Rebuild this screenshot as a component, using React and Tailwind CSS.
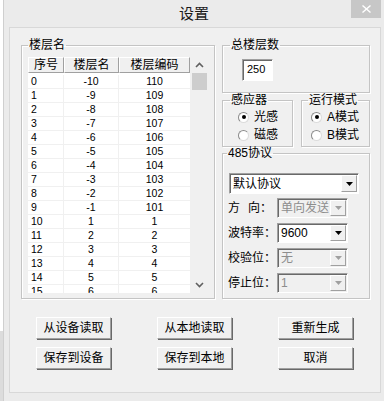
import React from 'react';

const floors = Array.from({ length: 16 }, (_, i) => ({
    idx: i,
    name: i < 10 ? i - 10 : i - 9,
    code: i < 10 ? 110 - i : i - 9,
}));

const raised = 'border border-t-white border-l-white border-r-[#a0a0a0] border-b-[#a0a0a0] shadow-[1px_1px_0_#696969]';
const sunken = 'border border-t-[#a0a0a0] border-l-[#a0a0a0] border-r-white border-b-white shadow-[inset_1px_1px_0_#696969]';

const GroupBox = ({ title, legendClass = 'ml-[6px]', className = '', children }) => (
    <fieldset className={`border border-[#c4c4c4] shadow-[inset_1px_1px_0_#fff,1px_1px_0_#fff] min-w-0 ${className}`}>
        <legend className={`px-[1px] text-[12px] leading-[16px] ${legendClass}`}>{title}</legend>
        {children}
    </fieldset>
);

const Arrow = ({ disabled }) => (
    <svg width="7" height="4" viewBox="0 0 7 4">
        <polygon points="0,0 7,0 3.5,4" fill={disabled ? '#a0a0a0' : '#000'} />
    </svg>
);

const Combo = ({ value, disabled, className = '' }) => (
    <div className={`${sunken} ${disabled ? 'bg-[#f0f0f0] text-[#8d8d8d]' : 'bg-white text-black'} flex items-center ${className}`}>
        <span className="flex-1 pl-[3px] text-[12px] leading-[16px] whitespace-nowrap overflow-hidden">{value}</span>
        <div className={`${raised} shadow-none border-r-[#696969] border-b-[#696969] bg-[#f0f0f0] w-[16px] self-stretch my-[1px] mr-[1px] flex items-center justify-center`}>
            <Arrow disabled={disabled} />
        </div>
    </div>
);

const Radio = ({ label, checked }) => (
    <div className="flex items-center h-[18px] gap-[5px]">
        <div className="w-[11px] h-[11px] rounded-full border border-t-[#8a8a8a] border-l-[#8a8a8a] border-r-[#dcdcdc] border-b-[#dcdcdc] bg-white flex items-center justify-center">
            {checked && <div className="w-[4px] h-[4px] rounded-full bg-black" />}
        </div>
        <span className="text-[12px] leading-[16px]">{label}</span>
    </div>
);

const Button = ({ children }) => (
    <button className={`${raised} w-[75px] h-[22px] bg-[#f0f0f0] text-[12px] leading-[16px] text-black`}>
        {children}
    </button>
);

const FormRow = ({ label, children }) => (
    <div className="flex items-center h-[20px] ml-[5px]">
        <div className="w-[49px] text-[12px] leading-[16px] whitespace-nowrap">{label}</div>
        {children}
    </div>
);

export default function App() {
    return (
        <div className="w-[384px] h-[401px] flex bg-[#ebebeb] overflow-hidden font-['Liberation_Sans','Noto_Sans_CJK_SC',sans-serif] text-black">
            {/* Window behind */}
            <div className="w-[3px] flex flex-col">
                <div className="flex-1 bg-white" />
                <div className="h-[70px] bg-[#dcdcdc]" />
            </div>
            <div className="w-px bg-[#cfcfcf]" />

            <div className="w-[380px] flex flex-col">
                {/* Title bar */}
                <div className="h-[27px] relative flex items-center justify-center">
                    <span className="text-[15px] leading-[20px] text-[#1a1a1a]">设置</span>
                    <div className="absolute top-0 right-[3px] w-[30px] h-[18px] bg-[#c7c7c7] flex items-center justify-center">
                        <svg width="9" height="8" viewBox="0 0 9 8">
                            <path d="M0.5 0.5 L8.5 7.5 M8.5 0.5 L0.5 7.5" stroke="#fff" strokeWidth="1.4" />
                        </svg>
                    </div>
                </div>

                {/* Panel */}
                <div className="ml-[5px] w-[372px] h-[366px] border border-[#d8d8d8] bg-[#f0f0f0] pt-[9px] pl-[11px]">
                    <div className="flex gap-[7px]">
                        {/* Floor list */}
                        <GroupBox title="楼层名" className="w-[194px] h-[262px]">
                            <div className="pl-[6px] pt-[4px]">
                                <div className="flex w-[179px] h-[236px]">
                                    <div className="w-[162px] flex flex-col bg-white">
                                        <div className="flex h-[16px] bg-[#f0f0f0]">
                                            {[['序号', 'w-[36px]'], ['楼层名', 'w-[55px]'], ['楼层编码', 'w-[71px]']].map(([t, w]) => (
                                                <div key={t} className={`${w} ${raised} shadow-none border-r-[#696969] border-b-[#696969] text-[12px] leading-[14px] text-center`}>
                                                    {t}
                                                </div>
                                            ))}
                                        </div>
                                        <div className="flex-1 overflow-hidden pt-[2px]">
                                            {floors.map((f) => (
                                                <div key={f.idx} className="flex h-[14px] border-b border-[#f0f0f0] text-[10.5px] leading-[13px]">
                                                    <div className="w-[36px] pl-[3px] border-r border-[#f0f0f0]">{f.idx}</div>
                                                    <div className="w-[55px] text-center border-r border-[#f0f0f0]">{f.name}</div>
                                                    <div className="w-[71px] text-center">{f.code}</div>
                                                </div>
                                            ))}
                                        </div>
                                    </div>
                                    {/* Scrollbar */}
                                    <div className="w-[17px] bg-[#f0f0f0] flex flex-col">
                                        <div className="h-[16px] flex items-center justify-center pl-[1px]">
                                            <svg width="9" height="6" viewBox="0 0 9 6">
                                                <polyline points="1,5 4.5,1.5 8,5" fill="none" stroke="#606060" strokeWidth="1.6" />
                                            </svg>
                                        </div>
                                        <div className="ml-[2px] w-[15px] h-[17px] bg-[#cdcdcd]" />
                                        <div className="flex-1" />
                                        <div className="h-[17px] flex items-center justify-center pl-[1px]">
                                            <svg width="9" height="6" viewBox="0 0 9 6">
                                                <polyline points="1,1 4.5,4.5 8,1" fill="none" stroke="#606060" strokeWidth="1.6" />
                                            </svg>
                                        </div>
                                    </div>
                                </div>
                            </div>
                        </GroupBox>

                        {/* Right column */}
                        <div className="w-[148px] flex flex-col">
                            <GroupBox title="总楼层数" legendClass="ml-[7px]" className="h-[56px]">
                                <div className="pl-[19px] pt-[6px]">
                                    <div className={`${sunken} bg-white w-[31px] h-[22px] text-[11px] leading-[18px] pl-[4px]`}>250</div>
                                </div>
                            </GroupBox>

                            <div className="flex gap-[8px] -mt-[1px]">
                                <GroupBox title="感应器" legendClass="ml-[7px]" className="w-[71px] h-[55px]">
                                    <div className="pl-[15px]">
                                        <Radio label="光感" checked />
                                        <Radio label="磁感" />
                                    </div>
                                </GroupBox>
                                <GroupBox title="运行模式" legendClass="ml-[6px]" className="w-[69px] h-[55px]">
                                    <div className="pl-[9px]">
                                        <Radio label="A模式" checked />
                                        <Radio label="B模式" />
                                    </div>
                                </GroupBox>
                            </div>

                            <GroupBox title="485协议" legendClass="ml-[4px]" className="h-[154px] -mt-[2px]">
                                <div className="pt-[12px]">
                                    <Combo value="默认协议" className="ml-[6px] w-[130px] h-[21px]" />
                                    <div className="mt-[4px] flex flex-col gap-[5px]">
                                        <FormRow label={<><span>方</span><span className="ml-[8px]">向：</span></>}>
                                            <Combo value="单向发送" disabled className="w-[71px] h-[20px]" />
                                        </FormRow>
                                        <FormRow label="波特率：">
                                            <Combo value="9600" className="w-[71px] h-[20px]" />
                                        </FormRow>
                                        <FormRow label="校验位：">
                                            <Combo value="无" disabled className="w-[71px] h-[20px]" />
                                        </FormRow>
                                        <FormRow label="停止位：">
                                            <Combo value="1" disabled className="w-[71px] h-[20px]" />
                                        </FormRow>
                                    </div>
                                </div>
                            </GroupBox>
                        </div>
                    </div>

                    {/* Buttons */}
                    <div className="mt-[18px] ml-[15px] grid grid-cols-[75px_75px_75px] gap-x-[46px] gap-y-[8px]">
                        <Button>从设备读取</Button>
                        <Button>从本地读取</Button>
                        <Button>重新生成</Button>
                        <Button>保存到设备</Button>
                        <Button>保存到本地</Button>
                        <Button>取消</Button>
                    </div>
                </div>
            </div>
        </div>
    );
}
